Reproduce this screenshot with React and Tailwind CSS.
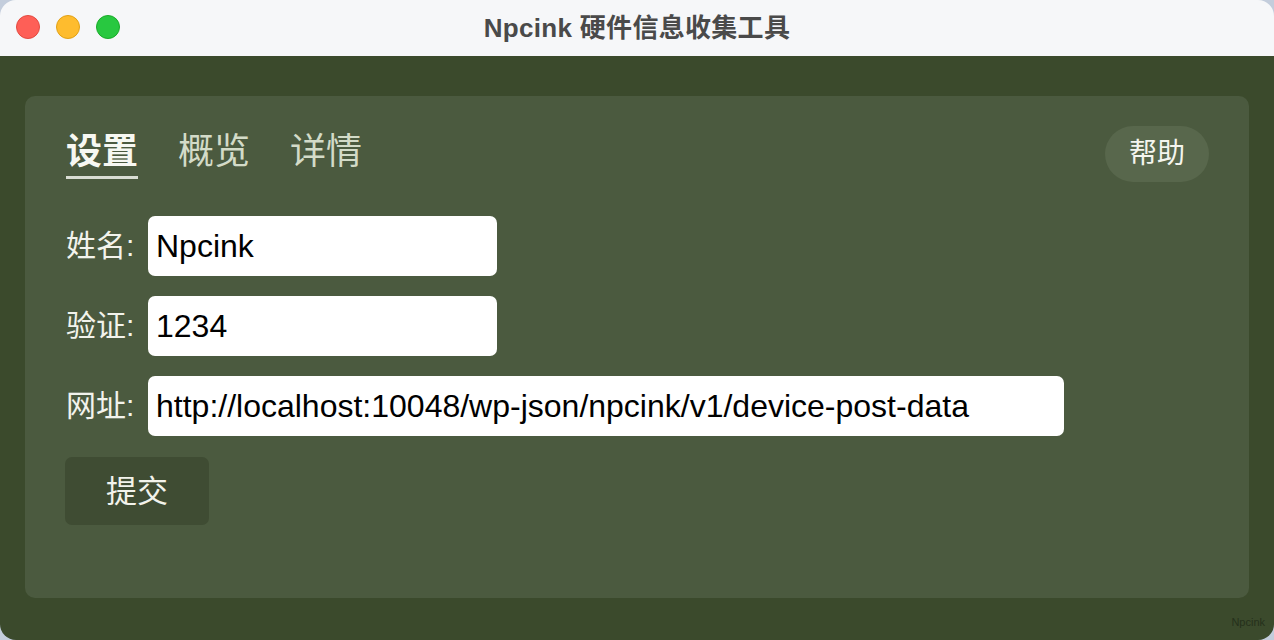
import { useState } from 'react';

const font = { fontFamily: '"Liberation Sans", "Noto Sans CJK SC", sans-serif' };

const Field = ({ label, value, width, onChange }) => (
  <div className="flex items-center">
    <label className="w-[82px] shrink-0 text-[30px] leading-none text-[#f2f3ec]">{label}</label>
    <input
      type="text"
      value={value}
      onChange={onChange}
      className={`${width} h-[60px] rounded-[7px] bg-white pl-[8px] text-[32px] text-black outline-none`}
      style={font}
    />
  </div>
);

const App = () => {
  const [tab, setTab] = useState('设置');
  const [formData, setFormData] = useState({
    name: 'Npcink',
    code: '1234',
    url: 'http://localhost:10048/wp-json/npcink/v1/device-post-data',
  });

  const handleChange = (key) => (e) => setFormData({ ...formData, [key]: e.target.value });

  const tabs = ['设置', '概览', '详情'];

  return (
    <div className="w-[1274px] h-[640px] bg-[#c3cddc]" style={font}>
      <div className="w-full h-full rounded-[16px] overflow-hidden flex flex-col">
        {/* title bar */}
        <div className="relative h-[56px] shrink-0 bg-[#f6f7f9] flex items-center justify-center">
          <div className="absolute left-[16px] top-[15px] flex gap-[16px]">
            <span className="w-[24px] h-[24px] rounded-full bg-[#fe5f57] border border-[#e24b41]" />
            <span className="w-[24px] h-[24px] rounded-full bg-[#febc2e] border border-[#e1a116]" />
            <span className="w-[24px] h-[24px] rounded-full bg-[#28c840] border border-[#1aab29]" />
          </div>
          <h1 className="text-[26px] font-bold text-[#4a4a4a] tracking-[0.3px]">Npcink 硬件信息收集工具</h1>
        </div>

        {/* body */}
        <div className="flex-1 bg-[#3b4a2c] px-[25px] pt-[40px] flex flex-col">
          <div className="h-[502px] rounded-[10px] bg-[#4b5a3f] pl-[41px] pr-[40px] pt-[30px]">
            <div className="flex justify-between items-start h-[56px]">
              <div className="flex gap-[40px] mt-[8px]">
                {tabs.map((t) => (
                  <button
                    key={t}
                    onClick={() => setTab(t)}
                    className={`text-[36px] leading-[36px] pb-[6px] border-b-[3px] ${
                      tab === t
                        ? 'font-bold text-[#f7f8f2] border-[#d9ddd3]'
                        : 'text-[#d3dbc8] border-transparent'
                    }`}
                  >
                    {t}
                  </button>
                ))}
              </div>
              <button className="h-[56px] px-[24px] rounded-full bg-[#58674c] text-[28px] leading-none text-[#f4f5ee]">
                帮助
              </button>
            </div>

            <form className="mt-[34px] flex flex-col gap-[20px]" onSubmit={(e) => e.preventDefault()}>
              <Field label="姓名:" value={formData.name} width="w-[349px]" onChange={handleChange('name')} />
              <Field label="验证:" value={formData.code} width="w-[349px]" onChange={handleChange('code')} />
              <Field label="网址:" value={formData.url} width="w-[916px]" onChange={handleChange('url')} />
              <div className="pt-[1px]">
                <button
                  type="submit"
                  className="-ml-[1px] w-[144px] h-[68px] rounded-[7px] bg-[#3f4c33] text-[31px] leading-none text-[#f2f3ec]"
                >
                  提交
                </button>
              </div>
            </form>
          </div>
          <div className="pt-[17px] flex justify-end">
            <span className="text-[11px] leading-[14px] text-[#25301b] -mr-[16px]">Npcink</span>
          </div>
        </div>
      </div>
    </div>
  );
};

export default App;
